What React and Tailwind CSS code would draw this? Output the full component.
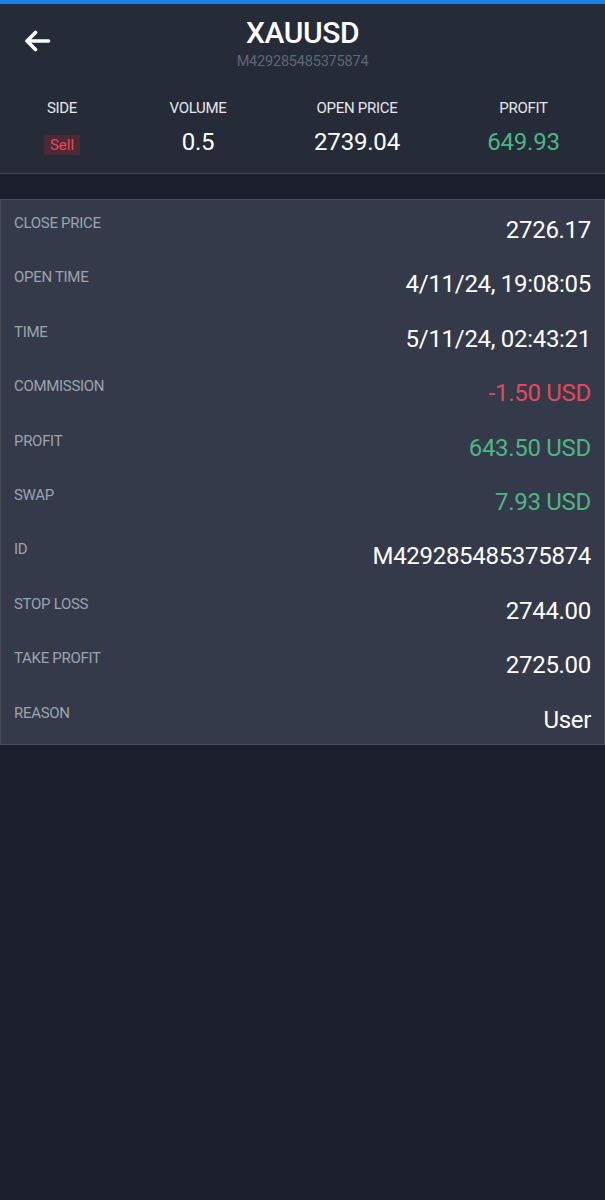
import React from "react";

const stats = [
  { label: "SIDE", value: "Sell", kind: "badge" },
  { label: "VOLUME", value: "0.5" },
  { label: "OPEN PRICE", value: "2739.04" },
  { label: "PROFIT", value: "649.93", color: "text-[#4cb684]" },
];

const rows = [
  { label: "CLOSE PRICE", value: "2726.17" },
  { label: "OPEN TIME", value: "4/11/24, 19:08:05" },
  { label: "TIME", value: "5/11/24, 02:43:21" },
  { label: "COMMISSION", value: "-1.50 USD", color: "text-[#e5485a]" },
  { label: "PROFIT", value: "643.50 USD", color: "text-[#4cb684]" },
  { label: "SWAP", value: "7.93 USD", color: "text-[#4cb684]" },
  { label: "ID", value: "M429285485375874" },
  { label: "STOP LOSS", value: "2744.00" },
  { label: "TAKE PROFIT", value: "2725.00" },
  { label: "REASON", value: "User" },
];

const BackArrow = () => (
  <svg width="27" height="22" viewBox="0 0 27 22" fill="none">
    <path
      d="M24.5 11H3M11.5 2.5L3 11l8.5 8.5"
      stroke="white"
      strokeWidth="3.6"
      strokeLinecap="round"
      strokeLinejoin="round"
    />
  </svg>
);

export default function App() {
  return (
    <div
      className="min-h-[1200px] w-[605px] bg-[#1b1f2d] text-white"
      style={{ fontFamily: "Roboto, 'Noto Sans', sans-serif" }}
    >
      <div className="h-[4px] bg-[#1f7fe0]" />

      {/* header */}
      <div className="bg-[#262b38] border-b border-[#3a404c] pb-[17px]">
        <div className="grid grid-cols-[1fr_auto_1fr] items-start pt-[12px]">
          <div className="pl-[24px] pt-[14px]">
            <BackArrow />
          </div>
          <div className="flex flex-col items-center">
            <div className="text-[30px] leading-[34px] font-medium tracking-[-0.4px]">
              XAUUSD
            </div>
            <div className="mt-[4px] text-[14.5px] leading-[16px] text-[#5f6675] tracking-[-0.2px]">
              M429285485375874
            </div>
          </div>
          <div />
        </div>

        <div className="mt-[28px] grid grid-cols-[124px_148px_170px_163px]">
          {stats.map((s) => (
            <div key={s.label} className="flex flex-col items-center">
              <div className="text-[15px] leading-[20px] text-[#e5e7eb] whitespace-nowrap tracking-[-0.3px]">
                {s.label}
              </div>
              {s.kind === "badge" ? (
                <div className="mt-[17px] h-[20px] px-[6px] rounded-[2px] bg-[#4b2a36] text-[#e24a5c] text-[15px] leading-[20px]">
                  {s.value}
                </div>
              ) : (
                <div
                  className={`mt-[10px] text-[24px] leading-[28px] tracking-[-0.2px] ${
                    s.color || "text-white"
                  }`}
                >
                  {s.value}
                </div>
              )}
            </div>
          ))}
        </div>
      </div>

      {/* details card */}
      <div className="mt-[25px] bg-[#343a4a] border border-[#474d5b]">
        {rows.map((r) => (
          <div
            key={r.label}
            className="h-[54.4px] flex justify-between items-start pl-[13px] pr-[13px]"
          >
            <div className="pt-[13px] text-[15px] leading-[20px] text-[#9ca3ae] tracking-[-0.3px]">
              {r.label}
            </div>
            <div
              className={`pt-[16px] text-[24px] leading-[28px] tracking-[-0.3px] ${
                r.color || "text-white"
              }`}
            >
              {r.value}
            </div>
          </div>
        ))}
      </div>
    </div>
  );
}
